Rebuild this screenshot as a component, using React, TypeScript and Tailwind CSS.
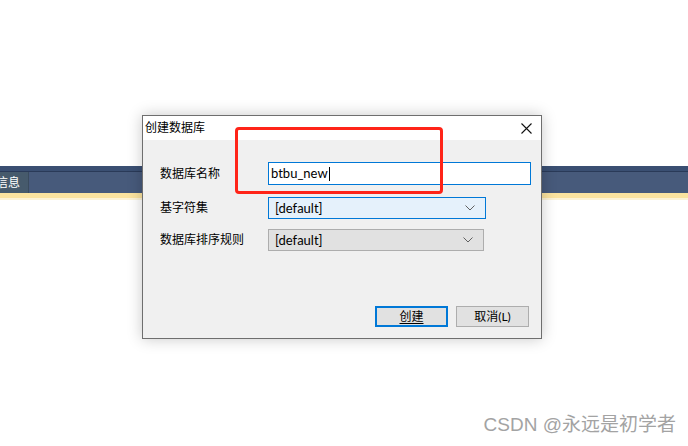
import React from 'react';

const uiFont = '"Segoe UI", Lato, "Noto Sans CJK SC", sans-serif';

/**
 * Chevron for the combo boxes.
 */
const Chevron = () => (
  <svg width="10" height="6" viewBox="0 0 10 6" className="shrink-0">
    <path d="M0.5 0.5 L5 5 L9.5 0.5" fill="none" stroke="#606060" strokeWidth="1" />
  </svg>
);

/**
 * ComboBox - fake Windows select.
 */
const ComboBox: React.FC<{ active?: boolean; width: string }> = ({ active, width }) => (
  <div
    className={`flex h-[22px] items-center justify-between pl-[6px] pr-[10px] border ${width} ${
      active ? 'bg-[#e5f1fb] border-[#0078d7]' : 'bg-[#e1e1e1] border-[#adadad]'
    }`}
  >
    <span className="text-[13px] text-black leading-none">[default]</span>
    <Chevron />
  </div>
);

export default function App() {
  return (
    <div className="relative w-full h-[446px] bg-white overflow-hidden" style={{ fontFamily: uiFont }}>
      {/* background app toolbar */}
      <div className="pt-[166px]">
        <div className="h-[5px] bg-[#3a4f72]" />
        <div className="h-[1px] bg-[#2a3a58]" />
        <div className="flex h-[21px] bg-[#475a7b]">
          <div className="w-[29px] h-full bg-[#465a6c] border-r border-[#3a4b5e] overflow-hidden flex items-center">
            <span className="ml-[-4px] text-[12px] text-white whitespace-nowrap leading-none">信息</span>
          </div>
        </div>
        <div className="h-[5px] bg-[#fbe39f]" />
        <div className="h-[2px] bg-[#fdf3d6]" />
      </div>

      {/* dialog */}
      <div className="absolute left-[142px] top-[115px] w-[400px] h-[224px] border border-[#6e6e6e] bg-[#f0f0f0] shadow-[0_0_14px_rgba(0,0,0,0.22)] flex flex-col">
        <div className="h-[24px] bg-white flex items-center justify-between pl-[2px] pr-[9px] shrink-0">
          <span className="text-[12px] text-black">创建数据库</span>
          <svg width="11" height="11" viewBox="0 0 11 11">
            <path d="M0.5 0.5 L10.5 10.5 M10.5 0.5 L0.5 10.5" stroke="#111" strokeWidth="1.1" />
          </svg>
        </div>

        <div className="flex-1 flex flex-col pt-[22px] pl-[17px] pr-[10px] pb-[11px] text-[12px] text-black">
          <div className="flex items-center h-[23px]">
            <span className="w-[108px]">数据库名称</span>
            <div className="w-[263px] h-[23px] bg-white border border-[#0078d7] flex items-center pl-[2px]">
              <span className="leading-none text-[13px]">btbu_new</span>
              <span className="w-[1px] h-[14px] bg-black ml-[1px]" />
            </div>
          </div>
          <div className="flex items-center h-[22px] mt-[12px]">
            <span className="w-[108px]">基字符集</span>
            <ComboBox active width="w-[218px]" />
          </div>
          <div className="flex items-center h-[22px] mt-[10px]">
            <span className="w-[108px]">数据库排序规则</span>
            <ComboBox width="w-[216px]" />
          </div>

          <div className="mt-auto flex justify-end gap-[8px] pr-[2px]">
            <button className="w-[73px] h-[21px] bg-[#e1e1e1] border-2 border-[#0078d7] text-[12px] flex items-center justify-center">
              <span className="underline underline-offset-2">创建</span>
            </button>
            <button className="w-[73px] h-[21px] bg-[#e1e1e1] border border-[#adadad] text-[12px] flex items-center justify-center">
              取消(L)
            </button>
          </div>
        </div>
      </div>

      {/* red annotation box */}
      <div className="absolute left-[235px] top-[127px] w-[208px] h-[67px] border-[3px] border-[#ff2418] rounded-[4px]" />

      {/* watermark */}
      <div
        className="absolute right-[12px] top-[413px] text-[19px] leading-[24px] text-[#a3a3a3] whitespace-nowrap"
        style={{ fontFamily: '"Liberation Sans", "Noto Sans CJK SC", sans-serif', textShadow: '0 0 2px #fff' }}
      >
        CSDN @永远是初学者
      </div>
    </div>
  );
}
